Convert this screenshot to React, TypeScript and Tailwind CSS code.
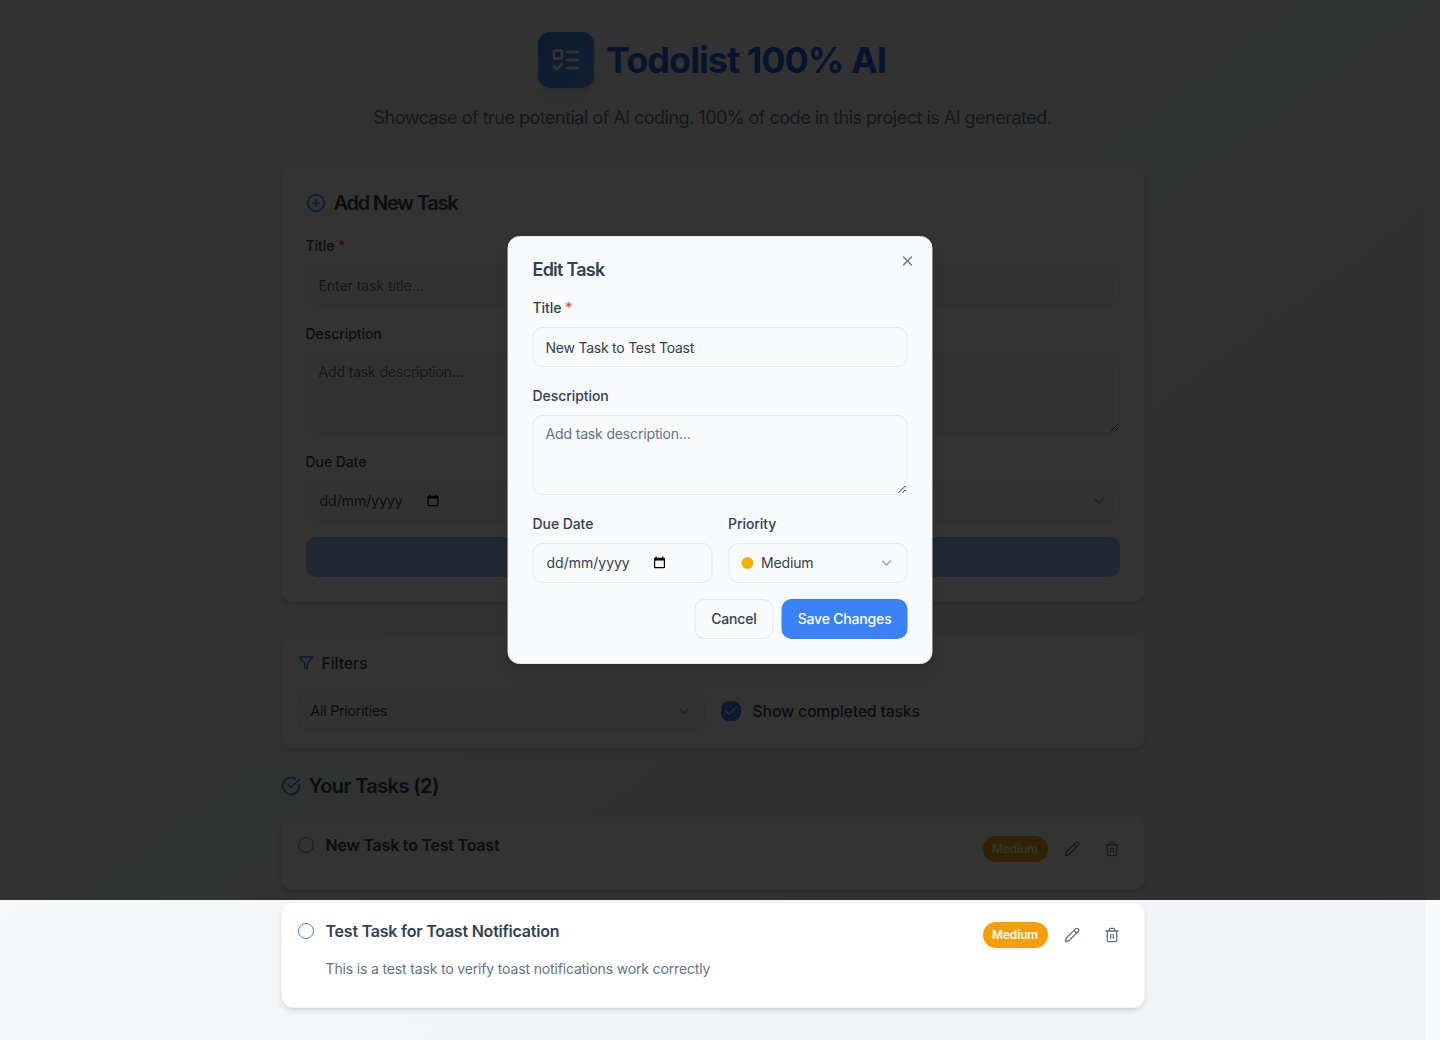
import React from 'react';
import type { ReactNode } from 'react';
import { CirclePlus, CircleCheckBig, Pencil, Trash2, X, ChevronDown, Check } from 'lucide-react';

const ListTodoIcon = () => (
  <svg className="h-8 w-8 text-white" viewBox="0 0 24 24" fill="none" stroke="currentColor" strokeWidth="2" strokeLinecap="round" strokeLinejoin="round">
    <rect x="3" y="5" width="6" height="6" rx="1" />
    <path d="m3 17 2 2 4-4M13 6h8M13 12h8M13 18h8" />
  </svg>
);

const FilterIcon = () => (
  <svg className="h-4 w-4 text-[#3b82f6]" viewBox="0 0 24 24" fill="none" stroke="currentColor" strokeWidth="2" strokeLinecap="round" strokeLinejoin="round">
    <polygon points="22 3 2 3 10 12.46 10 19 14 21 14 12.46 22 3" />
  </svg>
);

const CalendarIcon = () => (
  <svg className="mb-px h-[13px] w-3 text-black" viewBox="0 0 12 13" fill="currentColor">
    <path fillRule="evenodd" d="M2 0.5h1.2v1.2h5.4V0.5h1.2v1.2h.7a1 1 0 0 1 1 1v8.6a1 1 0 0 1-1 1H1.5a1 1 0 0 1-1-1V2.7a1 1 0 0 1 1-1H2V0.5ZM1.7 4.6v6.5h8.6V4.6H1.7Z" />
  </svg>
);

const Field = ({ label, required, children }: { label: string; required?: boolean; children: ReactNode }) => (
  <div className="flex min-w-0 flex-1 flex-col gap-2">
    <label className="text-sm leading-[22px] font-medium tracking-[-0.07px]">
      {label}
      {required && <span className="text-[#ef4444]"> *</span>}
    </label>
    {children}
  </div>
);

const TextInput = ({ value, placeholder }: { value?: string; placeholder: string }) => (
  <input
    className="h-10 w-full rounded-[10px] border border-[#e2e8f0] bg-[#f8fafc] px-3 py-2 text-sm tracking-[-0.24px] placeholder:tracking-[-0.05px] placeholder:text-[#64748b]"
    defaultValue={value}
    placeholder={placeholder}
  />
);

const DescriptionInput = () => (
  <textarea
    className="block h-20 w-full resize-y rounded-[10px] border border-[#e2e8f0] bg-[#f8fafc] px-3 py-2 text-sm placeholder:tracking-[-0.15px] placeholder:text-[#64748b]"
    placeholder="Add task description..."
  />
);

const DateInput = () => (
  <div className="flex h-10 w-full items-center rounded-[10px] border border-[#e2e8f0] bg-[#f8fafc] px-[13px] text-sm">
    <span className="w-[107px]">dd/mm/yyyy</span>
    <CalendarIcon />
  </div>
);

const Select = ({ label, dot }: { label: string; dot?: boolean }) => (
  <button className="flex h-10 w-full items-center justify-between rounded-[10px] border border-[#e2e8f0] bg-[#f8fafc] px-3 text-sm tracking-[-0.16px]">
    <span className="flex items-center gap-2">
      {dot && <span className="h-3 w-3 rounded-full bg-[#eab308]" />}
      {label}
    </span>
    <ChevronDown className="h-4 w-4 opacity-50" />
  </button>
);

const TaskCard = ({ title, description }: { title: string; description?: string }) => (
  <div className="flex items-start gap-3 rounded-xl border border-[#e2e8f0]/50 bg-white p-4 shadow-md">
    <span className="mt-1 h-4 w-4 shrink-0 rounded-full border border-[#3b82f6]" />
    <div className="flex-1">
      <h3 className="pb-4 text-base font-semibold tracking-[-0.22px]">{title}</h3>
      {description && <p className="pb-3 text-sm tracking-[-0.155px] text-[#64748b]">{description}</p>}
    </div>
    <div className="flex items-center gap-2 text-[#64748b]">
      <span className="flex h-[26px] w-[65px] items-center justify-center rounded-full bg-[#f59e0b] text-xs font-semibold tracking-[-0.15px] text-white">Medium</span>
      <button className="flex h-8 w-8 items-center justify-center"><Pencil className="h-4 w-4" /></button>
      <button className="flex h-8 w-8 items-center justify-center"><Trash2 className="h-4 w-4" /></button>
    </div>
  </div>
);

const EditDialog = () => (
  <div className="absolute top-1/2 left-1/2 h-[428px] w-[425px] [transform:translate(-50%,-50%)] rounded-xl border border-[#e2e8f0] bg-[#f8fafc] p-6 shadow-lg">
    <h2 className="text-lg leading-[18px] font-semibold tracking-[-0.76px]">Edit Task</h2>
    <button className="absolute top-4 right-4 opacity-70"><X className="h-4 w-4" /></button>
    <div className="mt-[18px] flex flex-col gap-[18px]">
      <Field label="Title" required><TextInput value="New Task to Test Toast" placeholder="Enter task title..." /></Field>
      <Field label="Description"><DescriptionInput /></Field>
      <div className="flex gap-4">
        <Field label="Due Date"><DateInput /></Field>
        <Field label="Priority"><Select label="Medium" dot /></Field>
      </div>
    </div>
    <div className="mt-4 flex justify-end gap-2 text-sm font-medium tracking-[-0.18px]">
      <button className="h-10 rounded-[10px] border border-[#e2e8f0] px-4">Cancel</button>
      <button className="h-10 rounded-[10px] bg-[#3b82f6] px-4 text-white">Save Changes</button>
    </div>
  </div>
);

export default function App() {
  return (
    <div className="relative h-[1040px] w-[1440px] overflow-hidden bg-[#f8fafc] font-['Inter',sans-serif] text-[#334155]">
      <div className="h-full w-[1425px] bg-linear-to-br from-[#fafbfb] to-[#f2f3f7]">
        <main className="mx-auto w-[896px] px-4 pt-8">
          <header className="flex flex-col items-center">
            <div className="flex items-center gap-3">
              <div className="rounded-xl bg-linear-to-br from-[#3b82f6] to-[#3b82f6]/80 p-3 shadow-lg"><ListTodoIcon /></div>
              <h1 className="w-[281px] text-4xl font-bold tracking-[-0.98px] whitespace-nowrap text-[#2563eb]">Todolist 100% AI</h1>
            </div>
            <p className="mt-4 text-lg tracking-[-0.51px] text-[#64748b]">Showcase of true potential of AI coding. 100% of code in this project is AI generated.</p>
          </header>

          <section className="mt-8 rounded-xl border border-[#e2e8f0]/50 bg-white p-6 shadow-md">
            <h2 className="flex items-center gap-2 text-xl font-semibold tracking-[-1.2px]">
              <CirclePlus className="h-5 w-5 text-[#3b82f6]" />
              Add New Task
            </h2>
            <div className="mt-[18px] flex flex-col gap-[18px]">
              <Field label="Title" required><TextInput placeholder="Enter task title..." /></Field>
              <Field label="Description"><DescriptionInput /></Field>
              <div className="flex gap-4">
                <Field label="Due Date"><DateInput /></Field>
                <Field label="Priority"><Select label="Medium" dot /></Field>
              </div>
            </div>
            <button className="mt-4 block h-10 w-full rounded-[10px] bg-[#3b82f6] text-sm font-medium text-white opacity-50">Add Task</button>
          </section>

          <section className="mt-8 rounded-xl border border-[#e2e8f0]/50 bg-white p-4 shadow-md">
            <h3 className="flex items-center gap-2 text-base font-medium tracking-[-0.2px]"><FilterIcon />Filters</h3>
            <div className="mt-4 grid grid-cols-2 gap-4">
              <Select label="All Priorities" />
              <label className="flex items-center gap-3 text-base font-medium tracking-[-0.28px]">
                <span className="flex h-5 w-5 items-center justify-center rounded-lg bg-[#3b82f6] text-white"><Check className="h-4 w-4" /></span>
                Show completed tasks
              </label>
            </div>
          </section>

          <section className="mt-6">
            <h2 className="flex items-center gap-2 text-xl font-semibold tracking-[-0.6px]"><CircleCheckBig className="h-5 w-5 text-[#3b82f6]" />Your Tasks (2)</h2>
            <div className="mt-4 flex flex-col gap-3">
              <TaskCard title="New Task to Test Toast" />
              <TaskCard title="Test Task for Toast Notification" description="This is a test task to verify toast notifications work correctly" />
            </div>
          </section>
        </main>
      </div>
      <div className="absolute inset-x-0 top-0 h-[900px] bg-black/80">
        <EditDialog />
      </div>
    </div>
  );
}
